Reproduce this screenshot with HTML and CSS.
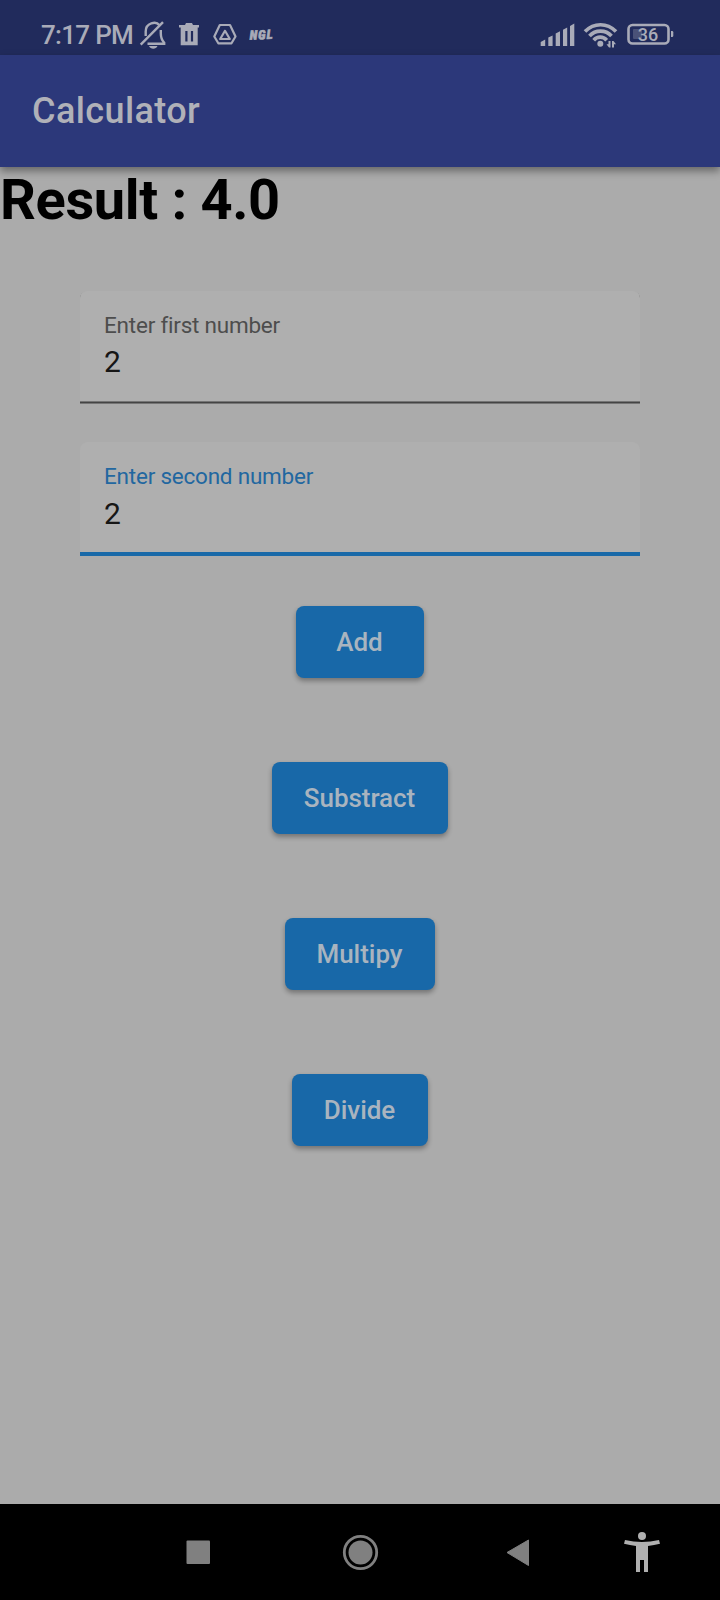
FILE: index.html
```html
<!DOCTYPE html>
<html lang="en">
<head>
<meta charset="utf-8">
<title>Calculator</title>
<link rel="stylesheet" href="styles.css">
</head>
<body>
<div class="screen">
  <header class="status">
    <span class="clock">7:17 PM</span>
    <svg class="notices" width="111" height="32" viewBox="138 19 111 32" fill="none" stroke="currentColor" stroke-width="2.400">
      <path d="M145.700 36V31.500c0-9 10.500-10.500 13.500-6.500M160.800 30v3.500c0 4.500.8 6.500 3.400 9.300v1H147.500M140.700 44.700 163 22.200"/>
      <path d="M149 46h8.500c-1.500 3.600-7 3.600-8.500 0z" fill="currentColor" stroke="none"/>
      <path d="M179 25h6l1-2h6l1 2h6v2.500h-20zM180.700 27.500h17v17.800h-17zM185.300 31v10.500h2.200V31zM190.900 31v10.500h2.200V31z" fill="currentColor" stroke="none" fill-rule="evenodd"/>
      <path d="M219.800 25h10.200l5.500 11.500-4 6.800h-13.200l-4-6.800zM225 30.800l-4.800 8.200h9.600z" stroke-width="2.200" stroke-linejoin="round"/>
    </svg>
    <svg class="ngl" width="289" height="30" viewBox="249 19 289 30" fill="currentColor" stroke="currentColor">
      <text x="249.500" y="39.300" textLength="23" lengthAdjust="spacing" transform="rotate(-2 261 34)">NGL</text>
    </svg>
    <svg class="signals" width="140" height="30" viewBox="538 20 140 30" fill="currentColor">
      <path d="M540.700 46v-4l4.500-2.500V46zM548.300 46v-8.500l4.300-2V46zM555.700 46V33.500l4.300-2.300V46zM563 46V29.800l4.200-2.300V46zM570 46V26l4.300-2.500V46z"/>
      <g fill="none" stroke="currentColor" stroke-width="3.700">
        <path d="M585 31.500c9-9 22-9 31 0M589.500 36c6-6.500 16-6.500 22 0M593.700 40.200c3.500-4 9.500-4 13 0"/>
      </g>
      <circle cx="600.300" cy="43.700" r="3"/>
      <path d="M608.500 41h2v6.500h-1.500l-2.500-3.200h2zM612 41h1.500l2.500 3.200h-2v3.300h-2z"/>
      <rect x="628.500" y="25" width="40" height="18.500" rx="4" fill="none" stroke="currentColor" stroke-width="2.600"/>
      <rect x="633" y="29" width="9" height="10" rx="1" opacity=".3"/>
      <path d="M671 31h1q1.300 0 1.300 1.300v3.400q0 1.300-1.300 1.300h-1z"/>
      <text class="battery" x="648" y="40.600" text-anchor="middle">36</text>
    </svg>
  </header>
  <div class="appbar"><h1 class="title">Calculator</h1></div>
  <main class="content">
    <div class="result">Result : 4.0</div>
    <div class="fields">
      <div class="field"><span class="label">Enter first number</span><span class="value">2</span></div>
      <div class="field active"><span class="label">Enter second number</span><span class="value">2</span></div>
    </div>
    <div class="actions">
      <button class="btn add">Add</button>
      <button class="btn subtract">Substract</button>
      <button class="btn multiply">Multipy</button>
      <button class="btn divide">Divide</button>
    </div>
  </main>
  <nav class="navbar">
    <svg width="720" height="96" viewBox="0 1504 720 96">
      <g fill="#808080">
        <rect x="186.500" y="1540.500" width="23.500" height="23.500" rx="1"/>
        <circle cx="360.500" cy="1552.500" r="12"/>
        <circle cx="360.500" cy="1552.500" r="16.200" fill="none" stroke="#808080" stroke-width="2.800"/>
        <path d="M507 1552.500 528.500 1540v25.500z" stroke="#808080" stroke-width="1" stroke-linejoin="round"/>
      </g>
      <g fill="#b0b0b0">
        <circle cx="642" cy="1536" r="4"/>
        <path d="M625 1540q17 4 34 0l1 3.800q-6 1.500-12 2.200v26h-4v-12h-4v12h-4v-26q-6-.7-12-2.200z"/>
      </g>
    </svg>
  </nav>
</div>
</body>
</html>
```
FILE: styles.css
```css
* { box-sizing: border-box; }
body { margin: 0; font-family: Roboto, sans-serif; }
.screen { width: 720px; height: 1600px; display: flex; flex-direction: column; background: #ababab; }
.status { height: 55px; background: #212b5c; color: #a9abb8; display: flex; align-items: flex-start; padding: 19px 0 0 41px; }
.clock { width: 97px; font-size: 26px; line-height: 32px; font-weight: 500; white-space: nowrap; letter-spacing: -.7px; }
.notices { flex: none; }
.ngl { flex: none; font-size: 13px; font-weight: 900; font-style: italic; font-stretch: condensed; stroke-width: .6px; }
.signals { margin-top: 1px; flex: none; }
.battery { font-size: 18px; font-weight: 500; }
.appbar { height: 112px; background: #2c387a; display: flex; align-items: center; padding-left: 32px; box-shadow: 0 4px 8px rgba(0,0,0,.4); z-index: 1; }
.title { margin: 0; font-size: 36px; font-weight: 500; line-height: 42px; color: #b0b1b8; letter-spacing: .4px; }
.content { flex: 1; }
.result { font-size: 56px; line-height: 64px; font-weight: 700; color: #000; letter-spacing: -.36px; padding-top: 1px; }
.fields { margin: 59px 80px 0; display: grid; gap: 38px; }
.field { height: 113px; background: #afafaf; border-radius: 8px 8px 0 0; box-shadow: inset 0 -1px #757575, inset 0 -2px #444, inset 0 -3px #757575; padding: 21px 24px 0; display: flex; flex-direction: column; }
.active { height: 114px; box-shadow: inset 0 -4px #1969a8; }
.label { font-size: 22.500px; line-height: 26px; color: #4d4d4d; letter-spacing: -.22px; }
.active .label { color: #2267a0; }
.value { font-size: 30px; line-height: 36px; margin-top: 6px; color: #161616; }
.active .value { margin-top: 7px; }
.actions { display: flex; flex-direction: column; align-items: center; gap: 84px; margin-top: 50px; }
.btn { height: 72px; border: 0; border-radius: 8px; background: #1868a8; color: #a9b4bf; font: 500 26px/30px Roboto, sans-serif; letter-spacing: -.05px; padding: 0 1px 0 0; box-shadow: 0 3px 5px rgba(0,0,0,.32); }
.add { width: 128px; }
.subtract { width: 176px; }
.multiply { width: 150px; }
.divide { width: 136px; }
.navbar { height: 96px; background: #000; }
.navbar svg { display: block; }
```
